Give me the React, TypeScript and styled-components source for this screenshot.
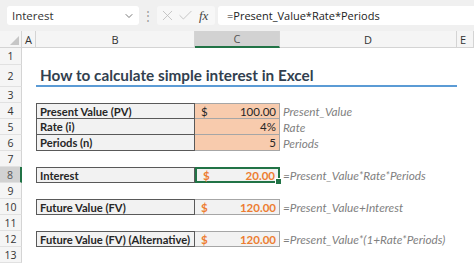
import styled, { createGlobalStyle } from 'styled-components'
import { ChevronDown, X, Check } from 'lucide-react'

const GlobalStyle = createGlobalStyle`
  html, body {
    margin: 0;
    padding: 0;
    background: #ffffff;
  }
  body {
    font-family: Lato, "Open Sans", sans-serif;
    overflow: hidden;
  }
`

type Row = {
    n: number
    label?: string
    kind?: 'input' | 'active' | 'result'
    dollar?: boolean
    value?: string
    note?: string
    title?: boolean
    first?: boolean
}

const rows: Row[] = [
    { n: 1 },
    { n: 2, title: true },
    { n: 3 },
    { n: 4, label: 'Present Value (PV)', kind: 'input', dollar: true, value: '100.00', note: 'Present_Value', first: true },
    { n: 5, label: 'Rate (i)', kind: 'input', value: '4%', note: 'Rate' },
    { n: 6, label: 'Periods (n)', kind: 'input', value: '5', note: 'Periods' },
    { n: 7 },
    { n: 8, label: 'Interest', kind: 'active', dollar: true, value: '20.00', note: '=Present_Value*Rate*Periods', first: true },
    { n: 9 },
    { n: 10, label: 'Future Value (FV)', kind: 'result', dollar: true, value: '120.00', note: '=Present_Value+Interest', first: true },
    { n: 11 },
    { n: 12, label: 'Future Value (FV) (Alternative)', kind: 'result', dollar: true, value: '120.00', note: '=Present_Value*(1+Rate*Periods)', first: true },
    { n: 13 },
]

const App = () => {
    return (
        <>
            <GlobalStyle />
            <Window>
                <FormulaBar>
                    <NameBox>
                        <span>Interest</span>
                        <ChevronDown size={12} strokeWidth={1.6} color="#555" />
                    </NameBox>
                    <Dots>⋮</Dots>
                    <FxBox>
                        <X size={17} strokeWidth={1.1} color="#b8b8b8" />
                        <Check size={17} strokeWidth={1.1} color="#b8b8b8" />
                        <Fx>fx</Fx>
                    </FxBox>
                    <FormulaInput>=Present_Value*Rate*Periods</FormulaInput>
                </FormulaBar>

                <Sheet>
                    <Corner />
                    <ColHead $align="left">A</ColHead>
                    <ColHead>B</ColHead>
                    <ColHead $selected>C</ColHead>
                    <ColHead>D</ColHead>
                    <ColHead $align="left">E</ColHead>

                    {rows.map((r) => (
                        <RowFragment key={r.n} r={r} />
                    ))}
                </Sheet>
            </Window>
        </>
    )
}

const RowFragment = ({ r }: { r: Row }) => {
    if (r.title) {
        return (
            <>
                <RowHead>{r.n}</RowHead>
                <Empty />
                <Title>How to calculate simple interest in Excel</Title>
                <Empty />
            </>
        )
    }
    if (!r.label) {
        return (
            <>
                <RowHead>{r.n}</RowHead>
                <Empty />
                <Empty />
                <Empty />
                <Empty />
                <Empty />
            </>
        )
    }
    return (
        <>
            <RowHead $selected={r.kind === 'active'}>{r.n}</RowHead>
            <Empty />
            <LabelCell $first={r.first}>{r.label}</LabelCell>
            <ValueCell $kind={r.kind!} $first={r.first}>
                <span>{r.dollar ? '$' : ''}</span>
                <span>{r.value}</span>
                {r.kind === 'active' && <Handle />}
            </ValueCell>
            <NoteCell>{r.note}</NoteCell>
            <Empty />
        </>
    )
}

export default App

const Window = styled.div`
    width: 474px;
    height: 264px;
    display: flex;
    flex-direction: column;
    background: #ffffff;
    overflow: hidden;
`

const FormulaBar = styled.div`
    height: 31px;
    box-sizing: border-box;
    background: #f0f0f0;
    display: flex;
    align-items: center;
    padding: 0 0 0 7px;
`

const NameBox = styled.div`
    width: 132px;
    height: 19px;
    box-sizing: border-box;
    background: #ffffff;
    border-radius: 3px;
    display: flex;
    align-items: center;
    justify-content: space-between;
    padding: 0 4px 0 5px;
    font-family: "Open Sans", sans-serif;
    font-size: 11.5px;
    color: #333;
`

const Dots = styled.div`
    width: 18px;
    text-align: center;
    color: #9a9a9a;
    font-size: 12px;
`

const FxBox = styled.div`
    width: 58px;
    height: 19px;
    box-sizing: border-box;
    background: #f7f7f7;
    border-radius: 3px;
    display: flex;
    align-items: center;
    gap: 1px;
    padding-left: 2px;
`

const Fx = styled.span`
    font-family: "Liberation Serif", serif;
    font-style: italic;
    font-size: 13px;
    color: #444;
    margin-left: 4px;
`

const FormulaInput = styled.div`
    flex: 1;
    height: 19px;
    margin-left: 3px;
    background: #ffffff;
    border-radius: 3px 0 0 3px;
    display: flex;
    align-items: center;
    padding-left: 9px;
    font-family: "Open Sans", sans-serif;
    font-size: 11px;
    color: #222;
`

const Sheet = styled.div`
    display: grid;
    grid-template-columns: 22px 14px 159px 85px 177px 1fr;
    grid-template-rows: 17px 17px 22px 16px repeat(10, 16px);
    font-family: Lato, sans-serif;
`

const Corner = styled.div`
    background: #f5f5f5;
    border-right: 1px solid #d4d4d4;
    border-bottom: 1px solid #d4d4d4;
    position: relative;
    &::after {
        content: '';
        position: absolute;
        right: 2px;
        bottom: 2px;
        border-style: solid;
        border-width: 0 0 9px 9px;
        border-color: transparent transparent #c6c6c6 transparent;
    }
`

const ColHead = styled.div<{ $selected?: boolean; $align?: 'left' | 'center' }>`
    background: ${(p) => (p.$selected ? '#d2d2d2' : '#f5f5f5')};
    border-right: 1px solid #d4d4d4;
    border-bottom: ${(p) => (p.$selected ? '2px solid #217346' : '1px solid #d4d4d4')};
    display: flex;
    align-items: center;
    justify-content: ${(p) => (p.$align === 'left' ? 'flex-start' : 'center')};
    padding-left: ${(p) => (p.$align === 'left' ? '3px' : '0')};
    font-family: "Open Sans", sans-serif;
    font-size: 11px;
    color: ${(p) => (p.$selected ? '#555' : '#333')};
`

const RowHead = styled.div<{ $selected?: boolean }>`
    background: ${(p) => (p.$selected ? '#d2d2d2' : '#f5f5f5')};
    border-right: ${(p) => (p.$selected ? '2px solid #217346' : '1px solid #d4d4d4')};
    border-bottom: 1px solid #e1e1e1;
    display: flex;
    align-items: center;
    justify-content: center;
    font-family: "Open Sans", sans-serif;
    font-size: 10.5px;
    color: ${(p) => (p.$selected ? '#555' : '#333')};
`

const Empty = styled.div``

const Title = styled.div`
    grid-column: span 3;
    border-bottom: 2px solid #5b9bd5;
    display: flex;
    align-items: center;
    padding-left: 4px;
    font-weight: 700;
    font-size: 15.3px;
    color: #323f4f;
`

const LabelCell = styled.div<{ $first?: boolean }>`
    background: #f2f2f2;
    border: 1px solid #595959;
    border-top: ${(p) => (p.$first ? '1px solid #595959' : 'none')};
    display: flex;
    align-items: center;
    padding-left: 3px;
    font-weight: 700;
    font-size: 11.2px;
    color: #262626;
    white-space: nowrap;
    overflow: hidden;
`

const ValueCell = styled.div<{ $kind: 'input' | 'active' | 'result'; $first?: boolean }>`
    position: relative;
    display: flex;
    align-items: center;
    justify-content: space-between;
    padding: 0 3px 0 6px;
    font-size: 11.5px;
    background: ${(p) => (p.$kind === 'input' ? '#f8cbad' : '#f2f2f2')};
    color: ${(p) => (p.$kind === 'input' ? '#262626' : '#ed7d31')};
    font-weight: ${(p) => (p.$kind === 'input' ? 400 : 700)};
    border: ${(p) => (p.$kind === 'active' ? '2px solid #217346' : '1px solid #a6a6a6')};
    border-left: ${(p) => (p.$kind === 'active' ? '2px solid #217346' : 'none')};
    border-top: ${(p) =>
        p.$kind === 'active' ? '2px solid #217346' : p.$first ? '1px solid #a6a6a6' : 'none'};
`

const Handle = styled.div`
    position: absolute;
    right: -4px;
    bottom: -4px;
    width: 5px;
    height: 5px;
    background: #217346;
    border: 1px solid #ffffff;
`

const NoteCell = styled.div`
    display: flex;
    align-items: center;
    padding-left: 3px;
    font-style: italic;
    font-size: 11.8px;
    color: #7f7f7f;
    white-space: nowrap;
`
